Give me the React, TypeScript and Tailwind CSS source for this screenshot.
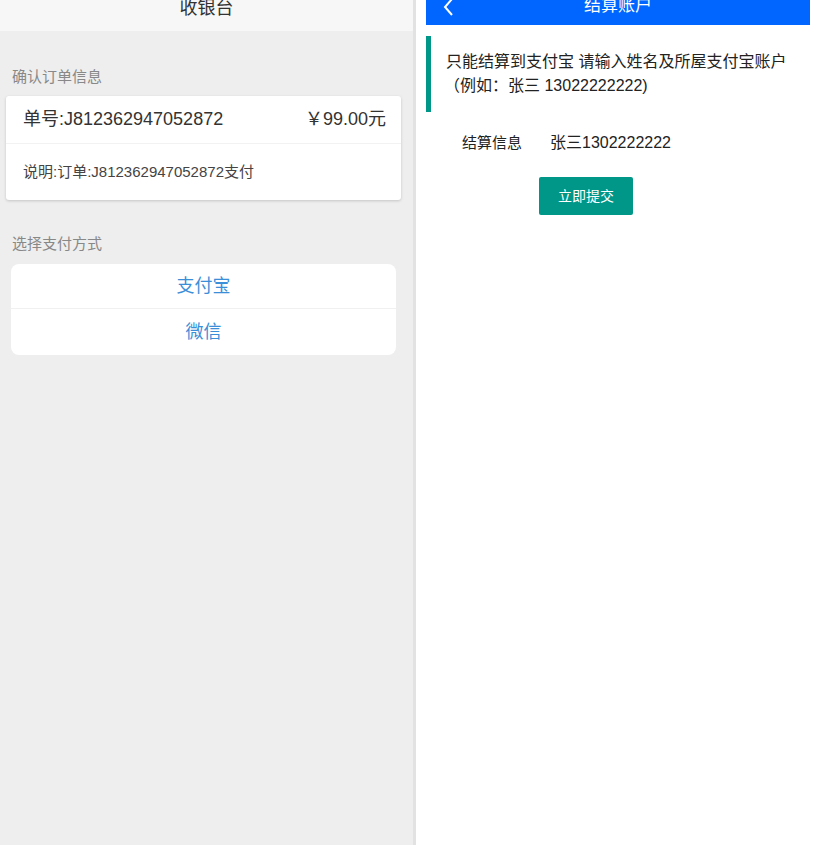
const cn = '"Liberation Sans", "Noto Sans CJK SC", sans-serif';

function Cashier() {
  return (
    <div className="flex w-[413px] shrink-0 flex-col bg-[#eeeeee]">
      <div className="flex h-[31px] justify-center bg-[#f7f7f7]">
        <span className="-mt-[4px] text-[18px] leading-[24px] text-[#333]">收银台</span>
      </div>

      <p className="mt-[36px] ml-[12px] text-[15px] leading-[20px] text-[#888]">确认订单信息</p>
      <div className="mt-[9px] ml-[6px] w-[395px] rounded-[3px] bg-white shadow-[0_1px_3px_rgba(0,0,0,0.18)]">
        <div className="flex h-[48px] items-center justify-between border-b border-[#f2f2f2] pl-[17px] pr-[15px]">
          <span className="text-[18px] text-[#333]">单号:J812362947052872</span>
          <span className="text-[18px] text-[#333]">￥99.00元</span>
        </div>
        <div className="flex h-[56px] items-center pl-[17px]">
          <span className="text-[15px] text-[#444]">说明:订单:J812362947052872支付</span>
        </div>
      </div>

      <p className="mt-[34px] ml-[12px] text-[15px] leading-[20px] text-[#888]">选择支付方式</p>
      <div className="mt-[10px] ml-[11px] w-[385px] overflow-hidden rounded-[8px] bg-white">
        <div className="flex h-[45px] items-center justify-center border-b border-[#f0f0f0] text-[18px] text-[#3b8fd9]">
          支付宝
        </div>
        <div className="flex h-[46px] items-center justify-center text-[18px] text-[#3b8fd9]">微信</div>
      </div>
    </div>
  );
}

function Settlement() {
  return (
    <div className="flex flex-1 flex-col bg-white">
      <div className="relative ml-[10px] mr-[13px] flex h-[25px] items-start justify-center bg-[#0066ff]">
        <svg
          className="absolute left-[16px] -top-[4px]"
          width="14"
          height="22"
          viewBox="0 0 14 22"
          fill="none"
          stroke="white"
          strokeWidth="2"
        >
          <path d="M10 3 L3 11 L10 19" />
        </svg>
        <span className="-mt-[6px] text-[17px] leading-[24px] text-white">结算账户</span>
      </div>

      <div className="ml-[10px] mt-[11px] border-l-[5px] border-[#009688] py-[14px] pl-[15px] text-[16px] leading-[24px] text-[#222]">
        <p>只能结算到支付宝 请输入姓名及所屋支付宝账户</p>
        <p className="-ml-[2px]">（例如：张三 13022222222)</p>
      </div>

      <div className="mt-[19px] ml-[46px] flex items-center leading-[24px] text-[#222]">
        <span className="w-[88px] text-[15px]">结算信息</span>
        <span className="text-[16px]">张三1302222222</span>
      </div>

      <button className="mt-[22px] ml-[123px] h-[38px] w-[94px] rounded-[2px] bg-[#009688] text-[14px] text-white">
        立即提交
      </button>
    </div>
  );
}

export default function App() {
  return (
    <div className="flex h-[845px] w-[823px] overflow-hidden" style={{ fontFamily: cn }}>
      <Cashier />
      <div className="w-[3px] shrink-0 bg-[#e2e2e2]" />
      <Settlement />
    </div>
  );
}
